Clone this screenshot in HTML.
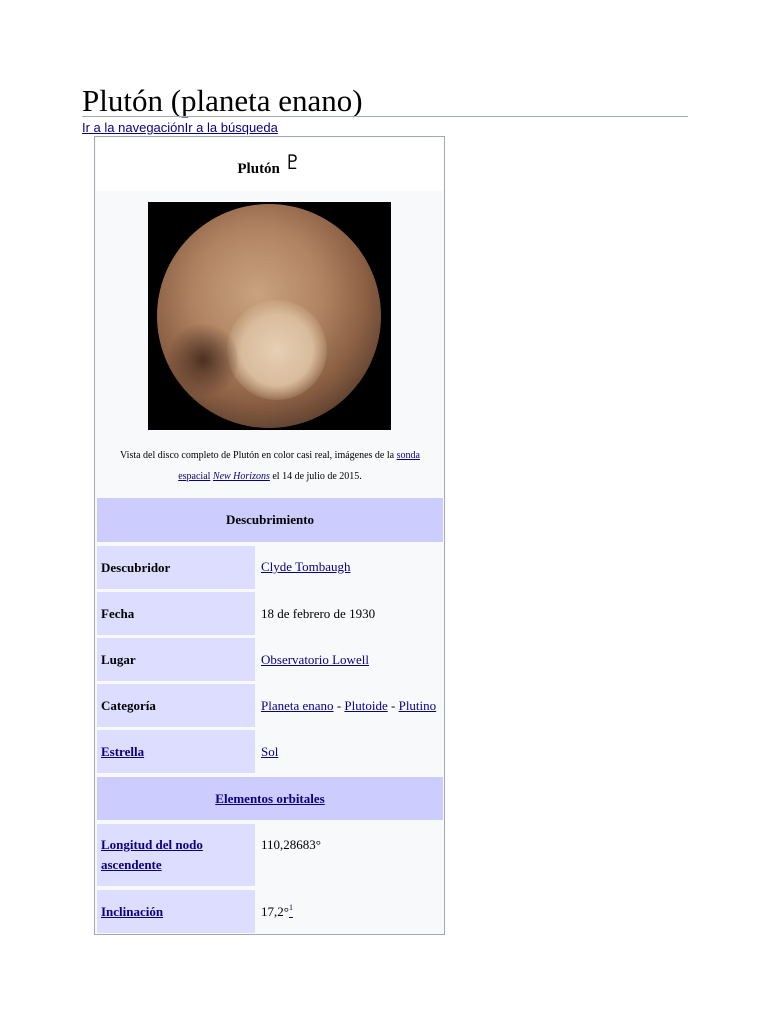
<!DOCTYPE html>
<html><head><meta charset="utf-8"><style>
body{margin:0;background:#fff;width:768px;height:1024px;position:relative;font-family:"Liberation Serif",serif;}
.a{position:absolute;}
a{color:#0b0080;text-decoration:underline;}
h1{position:absolute;left:82px;top:83px;margin:0;font-weight:normal;font-size:31px;font-family:"Liberation Serif",serif;color:#000;}
.line{left:82px;top:116px;width:606px;height:1px;background:#a2a9b1;}
.nav{left:82px;top:120px;font-family:"Liberation Sans",sans-serif;font-size:13px;}
.box{left:94px;top:136px;width:351px;height:799px;border:1px solid #a2a9b1;background:#f8f9fa;box-sizing:border-box;}
.cell{position:absolute;box-sizing:border-box;font-size:13px;color:#000;}
.lab{background:#ddddff;left:97px;width:158px;font-weight:bold;padding-left:4px;display:flex;align-items:center;}
.val{left:258px;width:185px;padding-left:3px;display:flex;align-items:center;}
.sec{background:#ccccff;left:97px;width:346px;font-weight:bold;display:flex;align-items:center;justify-content:center;}
</style></head><body>
<h1>Plutón (planeta enano)</h1>
<div class="a line"></div>
<div class="a nav"><a>Ir a la navegación</a><a>Ir a la búsqueda</a></div>
<div class="a box"></div>
<div class="a" style="left:96px;top:138px;width:347px;height:53px;background:#fff;"></div>
<div class="a" style="left:96px;top:154px;width:347px;text-align:center;font-size:15px;font-weight:bold;">Plutón <span style="font-family:'DejaVu Sans',sans-serif;font-weight:normal;font-size:20px;position:relative;top:-4px;">♇</span></div>
<div class="a" style="left:148px;top:202px;width:243px;height:228px;background:#000;"></div>
<div class="a" style="left:157px;top:204px;width:224px;height:224px;border-radius:50%;background:radial-gradient(circle at 45% 40%,#c9a27e 0%,#b08463 35%,#8a5f43 60%,#4a3326 85%,#1c140f 100%);"></div>
<div class="a" style="left:227px;top:300px;width:100px;height:100px;border-radius:50%;background:radial-gradient(circle,#e6cfb3 0%,#d8bc9c 50%,rgba(200,170,140,0) 75%);"></div>
<div class="a" style="left:168px;top:320px;width:70px;height:80px;border-radius:50%;background:radial-gradient(circle,#4c3022 0%,rgba(70,45,30,0) 70%);"></div>
<div class="a" style="left:118px;top:445px;width:304px;text-align:center;font-size:10px;line-height:21px;">Vista del disco completo de Plutón en color casi real, imágenes de la <a>sonda espacial</a> <a><i>New Horizons</i></a> el 14 de julio de 2015.</div>
<div class="cell sec" style="top:498px;height:44px;">Descubrimiento</div>
<div class="cell lab" style="top:546px;height:43px;">Descubridor</div><div class="cell val" style="top:546px;height:43px;align-items:flex-start;padding-top:13px;"><a>Clyde Tombaugh</a></div>
<div class="cell lab" style="top:592px;height:43px;">Fecha</div><div class="cell val" style="top:592px;height:43px;">18 de febrero de 1930</div>
<div class="cell lab" style="top:638px;height:43px;">Lugar</div><div class="cell val" style="top:638px;height:43px;"><a>Observatorio Lowell</a></div>
<div class="cell lab" style="top:684px;height:43px;">Categoría</div><div class="cell val" style="top:684px;height:43px;"><span><a>Planeta enano</a> - <a>Plutoide</a> - <a>Plutino</a></span></div>
<div class="cell lab" style="top:730px;height:43px;"><a>Estrella</a></div><div class="cell val" style="top:730px;height:43px;"><a>Sol</a></div>
<div class="cell sec" style="top:777px;height:43px;"><a>Elementos orbitales</a></div>
<div class="cell lab" style="top:824px;height:62px;line-height:20px;"><a>Longitud del nodo ascendente</a></div><div class="cell val" style="top:824px;height:62px;align-items:flex-start;padding-top:13px;">110,28683°</div>
<div class="cell lab" style="top:890px;height:43px;"><a>Inclinación</a></div><div class="cell val" style="top:890px;height:43px;">17,2°<a><sup style="font-size:8px;">1</sup></a></div>
</body></html>
